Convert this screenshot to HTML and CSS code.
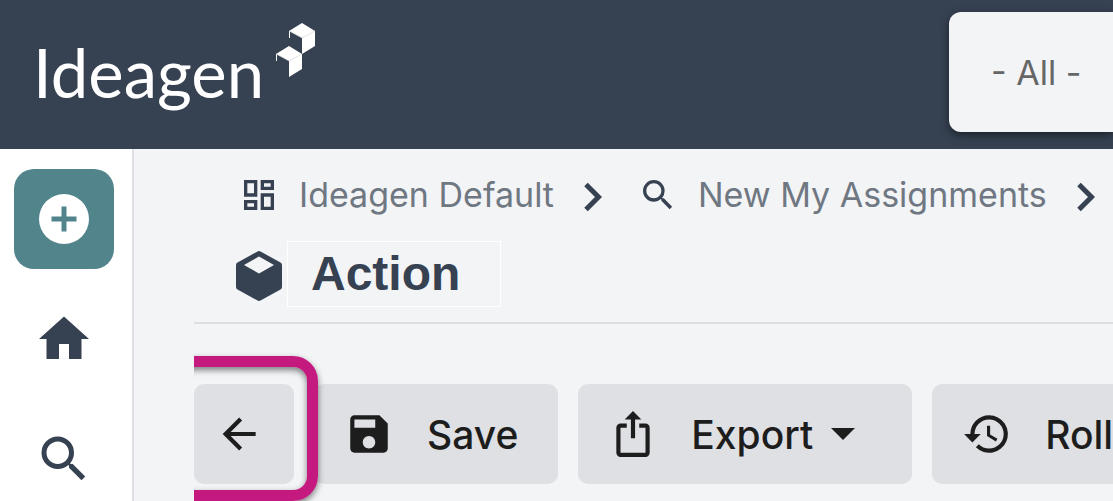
FILE: index.html
```html
<!DOCTYPE html>
<html lang="en">
<head>
<meta charset="utf-8">
<title>Ideagen - Action</title>
<link rel="stylesheet" href="styles.css">
</head>
<body>
<header class="topbar">
  <svg class="logo" viewBox="0 0 280 100" role="img" aria-label="Ideagen">
    <text class="logo-text" x="-5" y="77">Ideagen</text>
    <g fill="#fff">
      <path d="M264 2l13 8v15l-13 8V17l-13-7z"/>
      <path d="M251 25l13 8v15l-13 8V40l-13-7z"/>
    </g>
    <path d="M251.500 10v7M238.500 33v7" stroke="#fff" fill="none"/>
    <path d="M251 10l13 7 13-7M238 33l13 7 13-7" stroke="#c3c7cd" stroke-width=".5" fill="none"/>
  </svg>
  <select class="filter" aria-label="Filter"><option>- All -</option></select>
</header>
<div class="layout">
  <nav class="sidebar" aria-label="Main">
    <button class="side-item side-add" aria-label="Add">
      <svg viewBox="0 0 24 24"><path d="M17 13h-4v4h-2v-4H7v-2h4V7h2v4h4m-5-9a10 10 0 1 0 0 20 10 10 0 0 0 0-20z"/></svg>
    </button>
    <a class="side-item" href="#" aria-label="Home">
      <svg viewBox="0 0 24 24"><path d="M10 20v-6h4v6h5v-8h3L12 3 2 12h3v8z"/></svg>
    </a>
    <a class="side-item" href="#" aria-label="Search">
      <svg viewBox="0 0 24 24"><path d="M15.500 14h-.79l-.28-.27A6.471 6.471 0 0 0 16 9.500 6.500 6.500 0 1 0 9.500 16c1.610 0 3.090-.59 4.230-1.570l.27.28v.79l5 4.990L20.490 19l-4.990-5zm-6 0C7.010 14 5 11.990 5 9.500S7.010 5 9.500 5 14 7.010 14 9.500 11.990 14 9.500 14z"/></svg>
    </a>
  </nav>
  <main class="content">
    <nav class="crumbs" aria-label="Breadcrumb">
      <a class="crumb" href="#">
        <svg viewBox="0 0 24 24"><path d="M19 5v2h-4V5h4M9 5v6H5V5h4m10 8v6h-4v-6h4M9 17v2H5v-2h4M21 3h-8v6h8V3zM11 3H3v10h8V3zm10 8h-8v10h8V11zm-10 4H3v6h8v-6z"/></svg>
        <span>Ideagen Default</span>
      </a>
      <svg class="chevron" viewBox="0 0 18 30"><path d="M2 2.500L14.500 15 2 27.500" fill="none" stroke="#364152" stroke-width="5"/></svg>
      <a class="crumb" href="#">
        <svg viewBox="0 0 24 24"><path d="M15.500 14h-.79l-.28-.27A6.471 6.471 0 0 0 16 9.500 6.500 6.500 0 1 0 9.500 16c1.610 0 3.090-.59 4.230-1.570l.27.28v.79l5 4.990L20.490 19l-4.990-5zm-6 0C7.010 14 5 11.990 5 9.500S7.010 5 9.500 5 14 7.010 14 9.500 11.990 14 9.500 14z"/></svg>
        <span>New My Assignments</span>
      </a>
      <svg class="chevron" viewBox="0 0 18 30"><path d="M2 2.500L14.500 15 2 27.500" fill="none" stroke="#364152" stroke-width="5"/></svg>
    </nav>
    <div class="heading">
      <svg class="cube" viewBox="0 0 46 50"><path fill-rule="evenodd" d="M21.500.5q1.500-.8 3 0l20 11q1.500.9 1.500 2.500v22q0 1.600-1.500 2.500l-20 11q-1.500.8-3 0l-20-11Q0 37.600 0 36V14q0-1.600 1.500-2.500zM23 5.500L8 14l15 8.500L38 14z"/></svg>
      <h1 class="title">Action</h1>
    </div>
    <div class="toolbar">
      <div class="callout">
        <button class="tool tool-back" aria-label="Back">
          <svg viewBox="0 0 24 24"><path d="M20 11v2H8l5.500 5.500-1.420 1.420L4.160 12l7.920-7.920L13.500 5.500 8 11z"/></svg>
        </button>
      </div>
      <button class="tool">
        <svg viewBox="0 0 24 24"><path d="M17 3H5c-1.110 0-2 .9-2 2v14c0 1.100.89 2 2 2h14c1.100 0 2-.9 2-2V7l-4-4zm-5 16c-1.660 0-3-1.340-3-3s1.340-3 3-3 3 1.340 3 3-1.340 3-3 3zm3-10H5V5h10v4z"/></svg>
        <span>Save</span>
      </button>
      <button class="tool tool-menu">
        <svg viewBox="0 0 24 24"><path d="M12 1L8 5h3v9h2V5h3M18 23H6a2 2 0 0 1-2-2V9a2 2 0 0 1 2-2h3v2H6v12h12V9h-3V7h3a2 2 0 0 1 2 2v12a2 2 0 0 1-2 2z"/></svg>
        <span>Export</span>
        <i class="caret"></i>
      </button>
      <button class="tool">
        <svg viewBox="0 0 24 24"><path d="M13.500 8H12v5l4.280 2.540.72-1.210-3.500-2.080V8M13 3a9 9 0 0 0-9 9H1l3.960 4.030L9 12H6a7 7 0 1 1 7 7c-1.930 0-3.680-.79-4.940-2.060l-1.420 1.420A9 9 0 1 0 13 3"/></svg>
        <span>Roll</span>
      </button>
    </div>
  </main>
</div>
</body>
</html>
```
FILE: styles.css
```css
* { box-sizing: border-box; }

body {
  margin: 0;
  min-height: 100vh;
  display: flex;
  flex-direction: column;
  overflow: hidden;
  background: #f3f4f6;
  color: #364152;
  font-family: Inter, "Liberation Sans", sans-serif;
}

svg { flex: none; fill: currentColor; }

.topbar {
  display: flex;
  justify-content: space-between;
  align-items: flex-start;
  padding: 12px 0 17px 38px;
  background: #364152;
}

.logo { width: 280px; height: 100px; margin-top: 9px; overflow: visible; }

.logo-text {
  font-family: Lato, sans-serif;
  font-size: 67px;
  fill: #fff;
}

.filter {
  appearance: none;
  width: 164px;
  height: 120px;
  padding: 0 0 0 42px;
  border: 0;
  border-radius: 12px 0 0 12px;
  background: #f3f4f6;
  box-shadow: 0 3px 8px rgba(0, 0, 0, .5);
  color: #666;
  font: 400 34px Inter, sans-serif;
}

.layout { flex: 1; display: flex; }

.sidebar {
  flex: none;
  display: flex;
  flex-direction: column;
  gap: 20px;
  width: 134px;
  padding: 20px 18px 0 14px;
  border-right: 2px solid #dddfe2;
  background: #fff;
}

.side-item {
  display: flex;
  align-items: center;
  justify-content: center;
  width: 100px;
  height: 100px;
  border: 0;
  border-radius: 20px;
  padding: 0;
  background: none;
  color: #364152;
}

.side-item svg { width: 60px; height: 60px; }
.side-add { background: #51848b; color: #fff; }

.content { flex: 1; min-width: 0; padding: 22px 0 0 60px; }

.crumbs {
  display: flex;
  align-items: center;
  height: 48px;
  padding-left: 45px;
  white-space: nowrap;
}

.crumb {
  display: flex;
  align-items: center;
  gap: 20px;
  color: #6f7882;
  font-size: 34px;
  line-height: 48px;
  text-decoration: none;
}

.crumb svg { width: 40px; height: 40px; color: #364152; }
.chevron { width: 18px; height: 30px; margin: 4px 36px 0 30px; }

.heading {
  display: flex;
  align-items: center;
  gap: 5px;
  padding: 22px 0 15px 42px;
  border-bottom: 2px solid #dddfe2;
}

.cube { width: 46px; height: 50px; margin-top: 4px; }

.title {
  width: 214px;
  margin: 0;
  padding: 0 23px;
  border: 1px solid #fff;
  font: 700 48px/64px "Liberation Sans", sans-serif;
}

.toolbar {
  display: flex;
  gap: 20px;
  padding: 60px 0 17px;
  overflow: hidden;
  white-space: nowrap;
}

.callout { position: relative; flex: none; }

.callout::after {
  content: "";
  position: absolute;
  z-index: 1;
  inset: -28px -24px -17px -26px;
  border: 11px solid #c41a7f;
  border-radius: 25px;
  box-shadow: 0 3px 6px rgba(0, 0, 0, .5), inset 0 3px 6px rgba(0, 0, 0, .5);
  pointer-events: none;
}

.tool {
  flex: none;
  display: flex;
  align-items: center;
  gap: 33px;
  height: 100px;
  padding: 0 40px 0 30px;
  border: 0;
  border-radius: 10px;
  background: #dfe0e3;
  color: #1d1d1d;
  font: 500 39px Inter, sans-serif;
}

.tool svg { width: 50px; height: 50px; }
.tool-back { width: 100px; padding: 0 20px; }
.tool-menu { padding-right: 57px; }

.caret {
  margin-left: -15px;
  border: solid transparent;
  border-width: 12px 12px 0;
  border-top-color: #1d1d1d;
}
```
